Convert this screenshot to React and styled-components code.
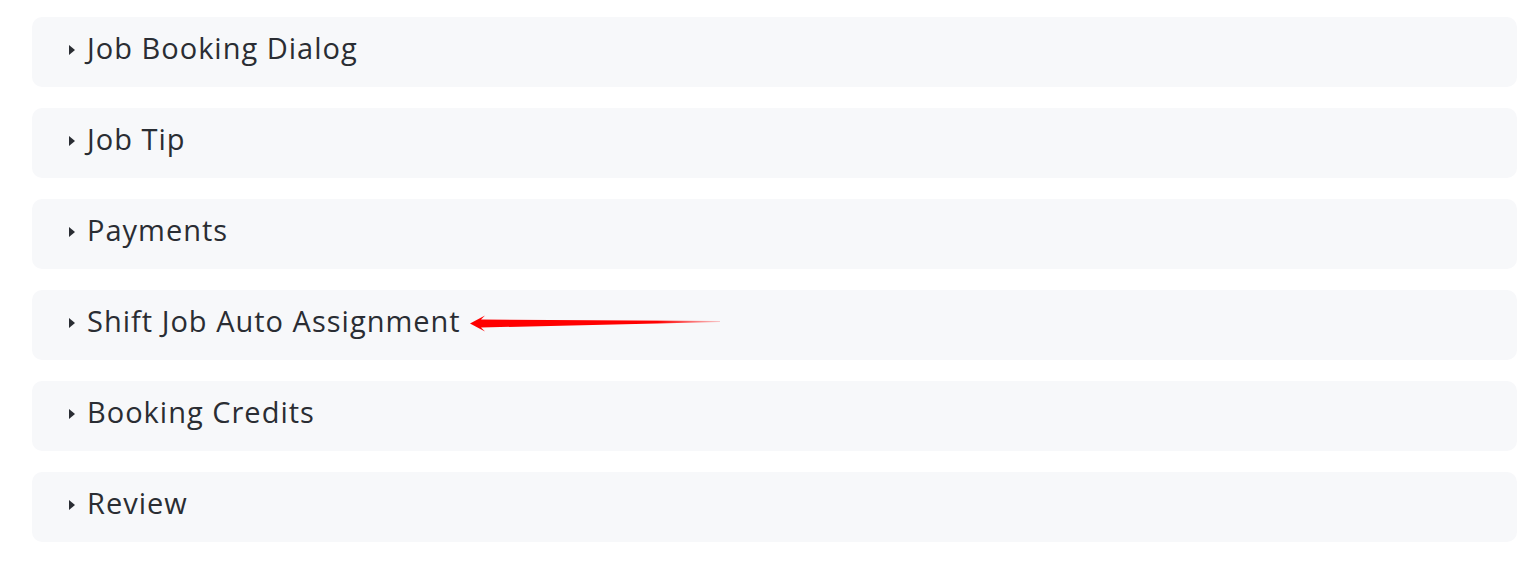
import React from "react";
import styled, { createGlobalStyle } from "styled-components";

const GlobalStyle = createGlobalStyle`
  body {
    margin: 0;
    background: #fff;
    font-family: "Open Sans", "Noto Sans", sans-serif;
  }
`;

const sections = [
  { title: "Job Booking Dialog" },
  { title: "Job Tip" },
  { title: "Payments" },
  { title: "Shift Job Auto Assignment", marked: true },
  { title: "Booking Credits" },
  { title: "Review" },
];

export default function App() {
  return (
    <>
      <GlobalStyle />
      <List>
        {sections.map((s) => (
          <Panel key={s.title}>
            <Header>
              <Caret />
              <Title>{s.title}</Title>
              {s.marked && <Pointer />}
            </Header>
          </Panel>
        ))}
      </List>
    </>
  );
}

const Pointer = () => (
  <ArrowWrap>
    <svg width="252" height="18" viewBox="0 0 252 18">
      <defs>
        <linearGradient id="fade" x1="0" x2="1" y1="0" y2="0">
          <stop offset="0" stopColor="#ff0000" />
          <stop offset="0.75" stopColor="#ff0000" />
          <stop offset="1" stopColor="#ff0000" stopOpacity="0.2" />
        </linearGradient>
      </defs>
      <path
        d="M0 9.5 L15 1.5 L11 5.5 L250 7 L250 8 L11 13.5 L15 17.5 Z"
        fill="url(#fade)"
      />
    </svg>
  </ArrowWrap>
);

const List = styled.div`
  display: flex;
  flex-direction: column;
  gap: 21px;
  padding: 17px 22px 0 32px;
`;

const Panel = styled.div`
  background: #f7f8fa;
  border-radius: 10px;
  height: 70px;
`;

const Header = styled.div`
  display: flex;
  align-items: center;
  height: 60px;
  padding-left: 37px;
`;

const Caret = styled.span`
  flex: none;
  width: 0;
  height: 0;
  border-top: 5px solid transparent;
  border-bottom: 5px solid transparent;
  border-left: 6px solid #2a2d33;
  margin-right: 12px;
  margin-top: 6px;
`;

const Title = styled.span`
  font-size: 29px;
  color: #2a2d33;
  letter-spacing: 1px;
`;

const ArrowWrap = styled.span`
  display: flex;
  margin-left: 9px;
  margin-top: 6px;
`;
